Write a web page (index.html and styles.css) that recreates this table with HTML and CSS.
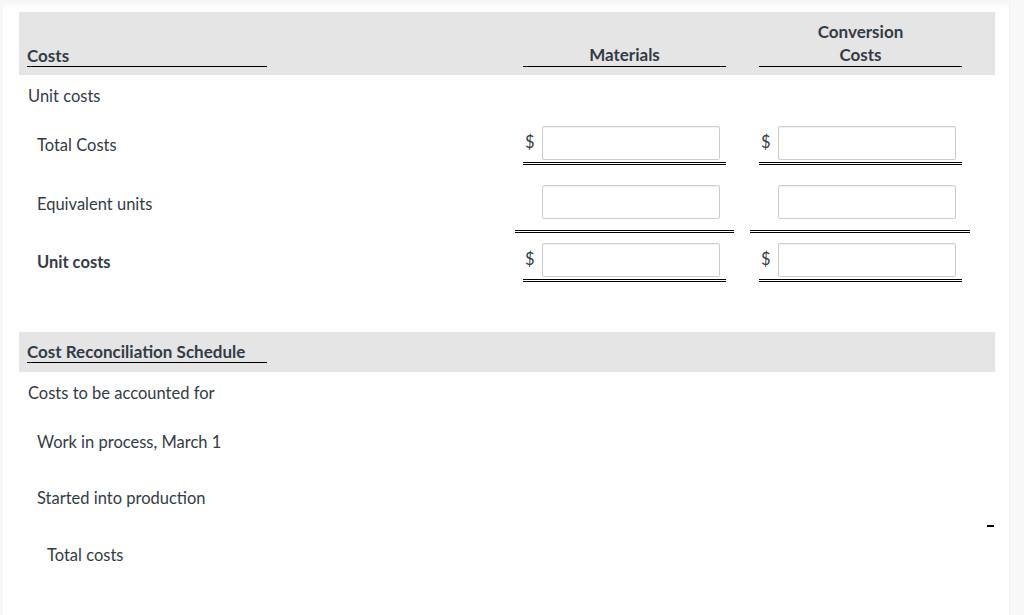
FILE: index.html
```html
<!DOCTYPE html>
<html lang="en">
<head>
<meta charset="utf-8">
<title>Unit costs</title>
<link rel="stylesheet" href="styles.css">
</head>
<body>
<div class="page">
  <main class="main">
    <section class="block">
      <div class="head-row">
        <div class="label-col"><span class="u-label">Costs</span></div>
        <div class="val-col"><div class="col-head">Materials</div></div>
        <div class="val-col second"><div class="col-head">Conversion<br>Costs</div></div>
      </div>

      <div class="text-row lvl0 unit-costs">Unit costs</div>

      <div class="row r-total">
        <div class="label-col lvl1">Total Costs</div>
        <div class="val-col"><div class="cell dbl"><span class="cur">$</span><input class="inp" type="text"></div></div>
        <div class="val-col second"><div class="cell dbl"><span class="cur">$</span><input class="inp" type="text"></div></div>
      </div>

      <div class="row r-equiv">
        <div class="label-col lvl1">Equivalent units</div>
        <div class="val-col full-dbl"><div class="cell"><span class="cur"></span><input class="inp" type="text"></div></div>
        <div class="val-col second full-dbl"><div class="cell"><span class="cur"></span><input class="inp" type="text"></div></div>
      </div>

      <div class="row r-unit">
        <div class="label-col lvl1 strong">Unit costs</div>
        <div class="val-col"><div class="cell dbl"><span class="cur">$</span><input class="inp" type="text"></div></div>
        <div class="val-col second"><div class="cell dbl"><span class="cur">$</span><input class="inp" type="text"></div></div>
      </div>
    </section>

    <section class="block recon">
      <div class="head-row sec-head">
        <div class="label-col"><span class="u-label">Cost Reconciliation Schedule</span></div>
      </div>
      <div class="text-row lvl0 r-acc">Costs to be accounted for</div>
      <div class="text-row lvl1 r-wip">Work in process, March 1</div>
      <div class="text-row lvl1 r-start">Started into production</div>
      <div class="tick-row"><span class="tick"></span></div>
      <div class="text-row lvl2 r-totc">Total costs</div>
    </section>
  </main>
  <div class="scrollbar"></div>
</div>
</body>
</html>
```

FILE: styles.css
```css
* { box-sizing: border-box; }

html, body {
  margin: 0;
  padding: 0;
  background: #fff;
}

body {
  font-family: Lato, "Open Sans", "Liberation Sans", sans-serif;
  font-size: 16.5px;
  color: #333c46;
}

.page {
  display: flex;
  width: 1024px;
  height: 615px;
  overflow: hidden;
}

.main {
  flex: 1;
  border-left: 3px solid #f7f7f7;
  background: linear-gradient(#f5f5f5, #ffffff 10px);
  padding-top: 12px;
}

.scrollbar {
  width: 15px;
  background: #f8f8f8;
  border-left: 1px solid #f1f1f1;
}

.block {
  margin-left: 16px;
  width: 976px;
}

.head-row {
  display: flex;
  align-items: flex-end;
  background: #e5e5e5;
  padding: 8px 0;
  font-weight: 700;
  font-size: 17px;
  height: 63px;
}

.label-col {
  width: 496px;
  flex: none;
}

.head-row .label-col {
  padding-left: 8px;
}

.u-label {
  display: block;
  width: 240px;
  padding-top: 2px;
  line-height: 21px;
  border-bottom: 1px solid #000;
}

.val-col {
  width: 219px;
  flex: none;
}

.val-col.second {
  width: 220px;
  margin-left: 16px;
}

.col-head {
  width: 203px;
  margin-left: 8px;
  padding-top: 1px;
  line-height: 22.5px;
  text-align: center;
  border-bottom: 1px solid #000;
}

.val-col.second .col-head {
  margin-left: 9px;
}

.text-row {
  line-height: 23px;
  height: 23px;
}

.lvl0 { padding-left: 9px; }
.lvl1 { padding-left: 18px; }
.lvl2 { padding-left: 28px; }

.strong { font-weight: 700; }

.unit-costs { margin-top: 10px; }

.row {
  display: flex;
  align-items: flex-start;
}

.row .label-col {
  line-height: 34px;
  height: 36px;
  padding-top: 2px;
}

.cell {
  display: flex;
  align-items: center;
  width: 203px;
  height: 39px;
  margin-left: 8px;
  padding-bottom: 2px;
}

.val-col.second .cell {
  margin-left: 9px;
}

.cur {
  width: 19px;
  height: 34px;
  flex: none;
  padding-left: 2px;
  line-height: 32px;
}

.inp {
  width: 178px;
  height: 34px;
  flex: none;
  margin: 0;
  padding: 0 6px;
  border: 1px solid #cdcdcd;
  border-radius: 2px;
  background: #fff;
  box-shadow: inset 0 1px 1px rgba(0, 0, 0, 0.06);
  font: inherit;
}

.dbl {
  border-bottom: 3px double #000;
}

.r-equiv .cell {
  height: 34px;
  padding-bottom: 0;
}

.r-total { margin-top: 18px; }

.r-equiv .val-col {
  padding-top: 20px;
  padding-bottom: 11px;
}

.r-equiv .label-col { margin-top: 20px; }

.full-dbl { border-bottom: 3px double #000; }

.r-unit .val-col { padding-top: 10px; }
.r-unit .label-col { margin-top: 10px; }

.recon { margin-top: 50px; }

.sec-head {
  height: 40px;
  padding: 9px 0 9px;
}

.r-acc { margin-top: 10px; }
.r-wip { margin-top: 26px; }
.r-start { margin-top: 33px; }

.tick-row {
  display: flex;
  justify-content: flex-end;
  margin-top: 15px;
  padding-right: 1px;
  height: 2px;
}

.tick {
  width: 7px;
  height: 2px;
  background: #000;
}

.r-totc { margin-top: 17px; }
```
